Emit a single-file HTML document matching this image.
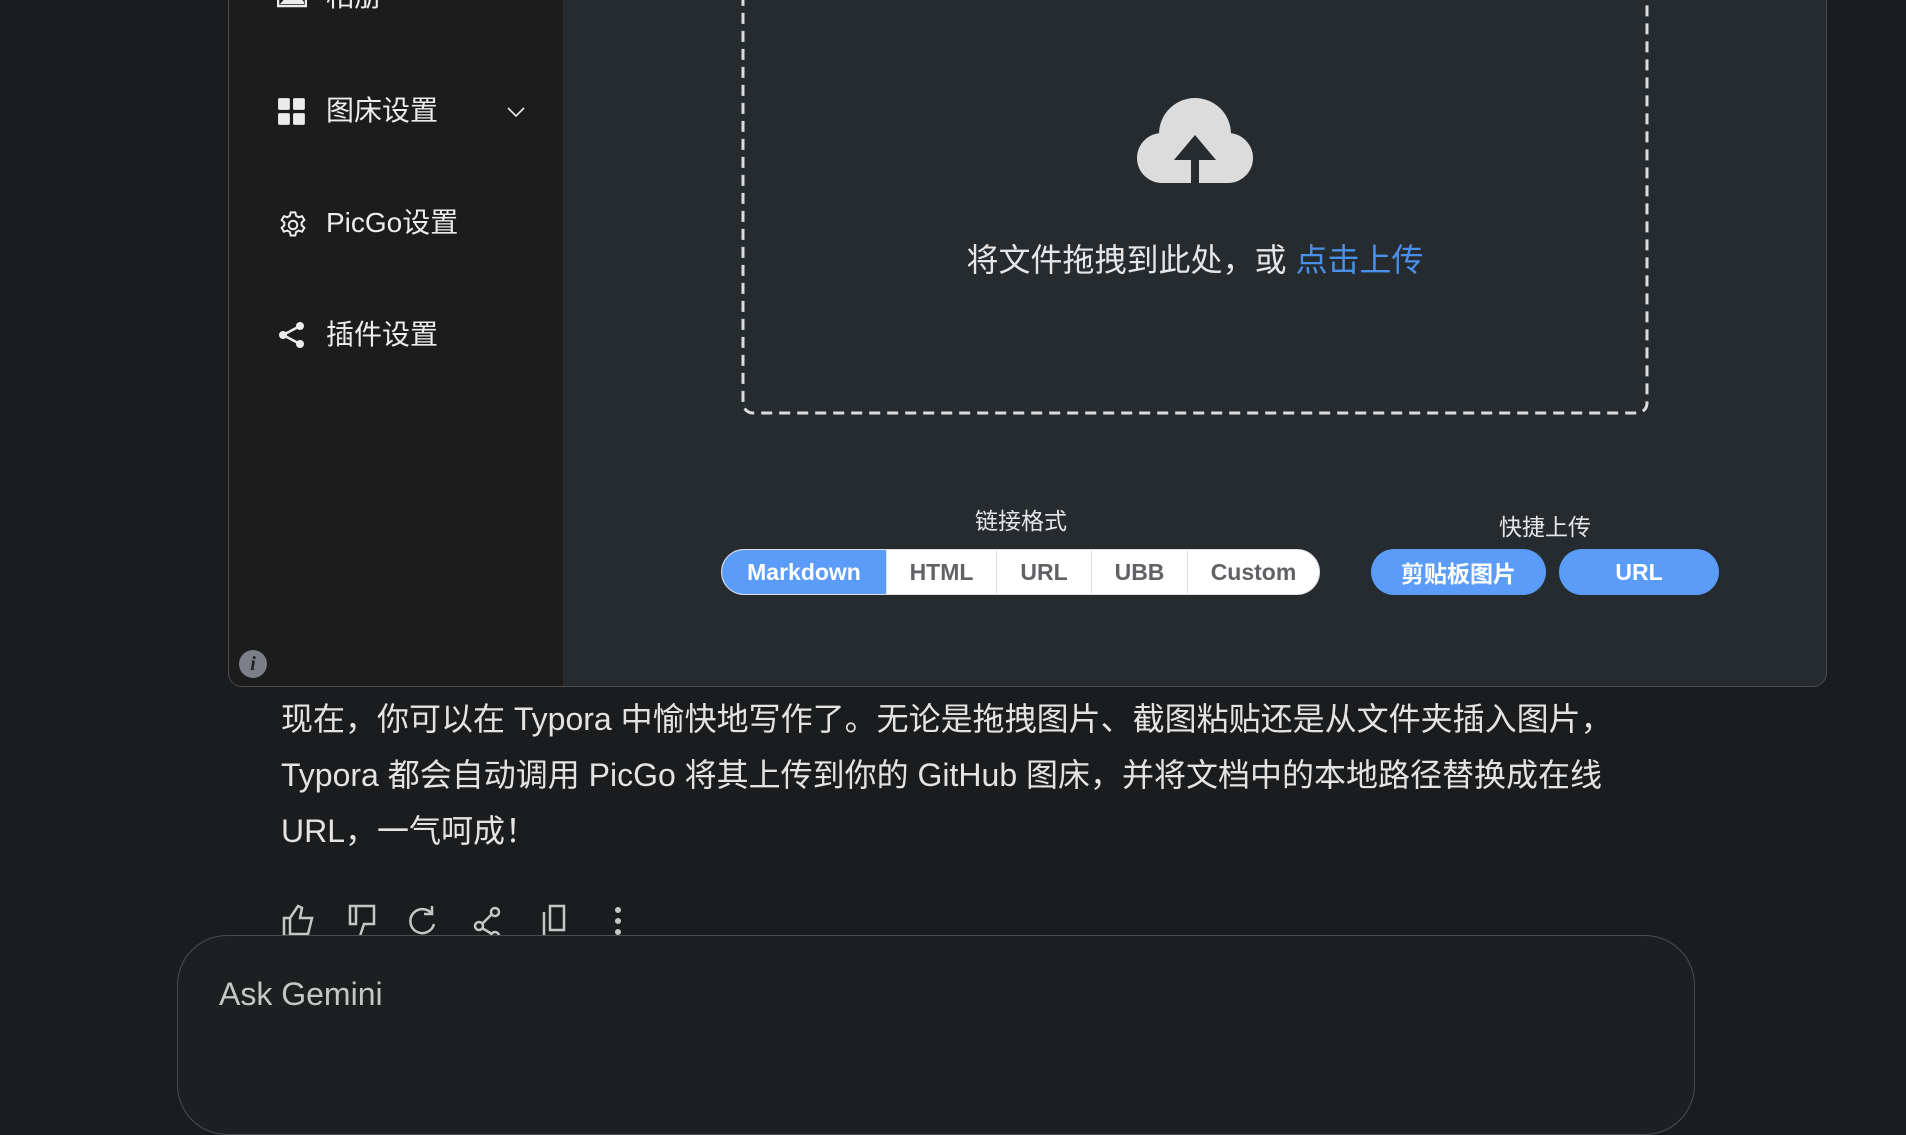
<!DOCTYPE html>
<html><head><meta charset="utf-8"><style>
*{margin:0;padding:0;box-sizing:border-box}
body{width:1906px;height:1058px;background:#1b1c1e;position:relative;overflow:hidden;font-family:"Liberation Sans","Noto Sans CJK SC",sans-serif}
.win{position:absolute;left:228px;top:-40px;width:1599px;height:727px;border:1px solid #4a4d52;border-radius:14px;overflow:hidden;background:#252b2f}
.side{position:absolute;left:0;top:0;width:334px;height:100%;background:#1c1c1d}
.it{position:absolute;left:48px;color:#ececec;font-size:28px;line-height:32px;height:32px;white-space:nowrap}
.it svg{position:absolute;left:0;top:2px}
.it span{position:absolute;left:49px;top:0}
.t{position:absolute;white-space:nowrap}
.seg{position:absolute;top:588px;height:46px;display:flex;border-radius:23px;overflow:hidden;left:492px;width:599px;background:#fff;border:1px solid #dcdfe6}
.seg div{height:100%;display:flex;align-items:center;justify-content:center;font-size:23px;font-weight:bold;color:#606266;border-left:1px solid #dcdfe6}
.btn{position:absolute;top:588px;height:46px;border-radius:23px;background:#5a9cf8;color:#fff;font-size:23px;font-weight:bold;display:flex;align-items:center;justify-content:center}
.p{position:absolute;left:281px;color:#e3e3e3;font-size:32px;white-space:nowrap;line-height:38px}
.ask{position:absolute;left:177px;top:935px;width:1518px;height:200px;border:1.5px solid #4a4d50;border-radius:50px;background:#1e1f20}
</style></head><body>
<div class="win">
 <div class="side">
  <div class="it" style="top:20px"><svg width="30" height="26" viewBox="0 0 30 26"><rect x="1" y="1" width="28" height="22" fill="none" stroke="#ececec" stroke-width="2.5"/><path d="M3 21 L11 12 L17 17 L22 13 L27 19 L27 21Z" fill="#ececec"/></svg><span>相册</span></div>
  <div class="it" style="top:134px"><svg width="30" height="30" viewBox="0 0 28 28" fill="#ececec"><rect x="1" y="1" width="11" height="11" rx="1.5"/><rect x="15" y="1" width="11" height="11" rx="1.5"/><rect x="1" y="15" width="11" height="11" rx="1.5"/><rect x="15" y="15" width="11" height="11" rx="1.5"/></svg><span>图床设置</span></div>
  <svg style="position:absolute;left:278px;top:145px" width="18" height="12" viewBox="0 0 18 12"><path d="M1 2 L9 10 L17 2" fill="none" stroke="#ececec" stroke-width="1.6"/></svg>
  <div class="it" style="top:246px"><svg width="32" height="32" viewBox="0 0 24 24" fill="none" stroke="#ececec" stroke-width="1.5"><circle cx="12" cy="12" r="3.2"/><path d="M10.3 2.5h3.4l.6 2.6 1.9 1.1 2.6-.8 1.7 2.9-2 1.8v2.2l2 1.8-1.7 2.9-2.6-.8-1.9 1.1-.6 2.6h-3.4l-.6-2.6-1.9-1.1-2.6.8-1.7-2.9 2-1.8v-2.2l-2-1.8 1.7-2.9 2.6.8 1.9-1.1z"/></svg><span>PicGo设置</span></div>
  <div class="it" style="top:358px"><svg width="30" height="28" viewBox="0 0 30 28" fill="#ececec"><circle cx="6" cy="14" r="4"/><circle cx="23" cy="5" r="4"/><circle cx="23" cy="23" r="4"/><path d="M6 14 L23 5 M6 14 L23 23" stroke="#ececec" stroke-width="2.5"/></svg><span>插件设置</span></div>
  <div style="position:absolute;left:10px;top:689px;width:28px;height:28px;border-radius:50%;background:#7c7f88;color:#222;font:italic bold 20px 'Liberation Serif',serif;text-align:center;line-height:28px">i</div>
 </div>
 <svg style="position:absolute;left:512px;top:0" width="910" height="456"><rect x="2" y="-20" width="904" height="472" rx="10" fill="none" stroke="#dcdcdc" stroke-width="3" stroke-dasharray="11 7"/></svg>
 <svg style="position:absolute;left:907px;top:135px" width="118" height="90" viewBox="0 0 118 90" fill="#dcdcdc"><circle cx="59" cy="38" r="36"/><circle cx="26" cy="62" r="25"/><circle cx="92" cy="62" r="25"/><rect x="26" y="50" width="66" height="37"/><path d="M59 39 L80 64 L63 64 L63 90 L55 90 L55 64 L38 64Z" fill="#252b2f"/></svg>
 <div class="t" style="left:0;width:1599px;text-align:center;top:274px;font-size:32px;color:#e6e6e6;padding-left:333px">将文件拖拽到此处，或 <span style="color:#4a90e8">点击上传</span></div>
 <div class="t" style="left:742px;width:100px;text-align:center;top:541px;font-size:23px;color:#e6e6e6">链接格式</div>
 <div class="t" style="left:1266px;width:100px;text-align:center;top:547px;font-size:23px;color:#e6e6e6">快捷上传</div>
 <div class="seg"><div style="width:164px;background:#5a9cf8;color:#fff;border:none">Markdown</div><div style="width:110px">HTML</div><div style="width:95px">URL</div><div style="width:96px">UBB</div><div style="flex:1">Custom</div></div>
 <div class="btn" style="left:1142px;width:175px">剪贴板图片</div>
 <div class="btn" style="left:1330px;width:160px">URL</div>
</div>
<div class="p" style="top:700px">现在，你可以在 Typora 中愉快地写作了。无论是拖拽图片、截图粘贴还是从文件夹插入图片，</div>
<div class="p" style="top:756px">Typora 都会自动调用 PicGo 将其上传到你的 GitHub 图床，并将文档中的本地路径替换成在线</div>
<div class="p" style="top:812px">URL，一气呵成！</div>
<svg style="position:absolute;left:280px;top:904px" width="360" height="34" viewBox="0 0 360 34" fill="none" stroke="#c4c7c5" stroke-width="2.5">
 <path d="M4 14h6v18H4z M10 14 L18 2 L22 4 L20 14 H32 L28 30 H10"/>
 <path d="M76 20h-6V2h6z M76 2 H94 V20 H84 L80 32"/>
 <path d="M152 10 A12 12 0 1 0 154 20 M152 2 V10 H144"/>
 <circle cx="199" cy="22" r="4"/><circle cx="215" cy="8" r="4"/><circle cx="215" cy="32" r="4"/><path d="M202 20 L212 10 M202 24 L212 30"/>
 <path d="M264 8 V32 M270 2 H284 V26 H270Z"/>
 <circle cx="338" cy="6" r="1.8" fill="#c4c7c5"/><circle cx="338" cy="17" r="1.8" fill="#c4c7c5"/><circle cx="338" cy="28" r="1.8" fill="#c4c7c5"/>
</svg>
<div class="ask"><div class="t" style="left:41px;top:40px;font-size:32px;color:#c4c7c5">Ask Gemini</div></div>
</body></html>
